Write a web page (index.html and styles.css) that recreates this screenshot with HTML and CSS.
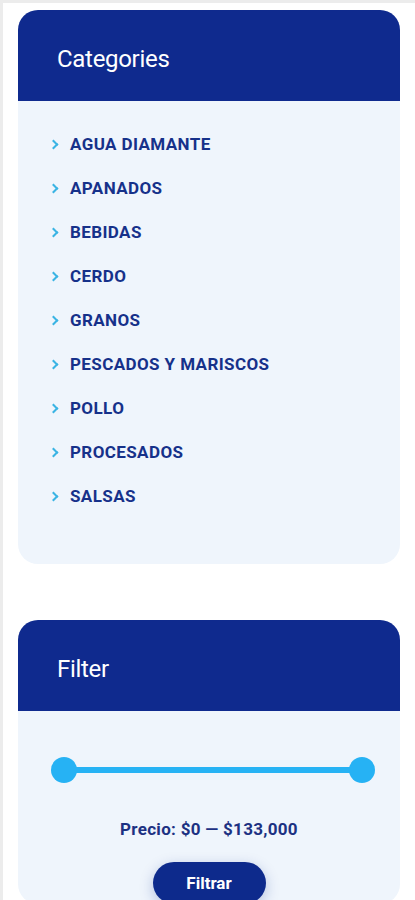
FILE: index.html
```html
<!DOCTYPE html>
<html lang="es">
<head>
<meta charset="UTF-8" />
<meta name="viewport" content="width=device-width, initial-scale=1" />
<title>Tienda - Categorías</title>
<link rel="stylesheet" href="styles.css">
</head>
<body>

<div class="sidebar">

  <section class="widget">
    <h2 class="widget-title">Categories</h2>
    <ul class="cat-list">
      <li><a href="#">AGUA DIAMANTE</a></li>
      <li><a href="#">APANADOS</a></li>
      <li><a href="#">BEBIDAS</a></li>
      <li><a href="#">CERDO</a></li>
      <li><a href="#">GRANOS</a></li>
      <li><a href="#">PESCADOS Y MARISCOS</a></li>
      <li><a href="#">POLLO</a></li>
      <li><a href="#">PROCESADOS</a></li>
      <li><a href="#">SALSAS</a></li>
    </ul>
  </section>

  <section class="widget">
    <h2 class="widget-title">Filter</h2>
    <div class="filter-body">
      <div class="range">
        <span class="handle"></span>
        <span class="track"></span>
        <span class="handle"></span>
      </div>
      <p class="price">Precio: $0 — $133,000</p>
      <button class="filter-btn">Filtrar</button>
    </div>
  </section>

</div>

</body>
</html>
```

FILE: styles.css
```css
body {
  margin: 0;
  padding: 0;
  background-color: #fff;
  font-family: Roboto, 'Liberation Sans', Arial, sans-serif;
}

.sidebar {
  border-top: 3px solid #ececec;
  border-left: 3px solid #ececec;
  padding: 7px 0 0 15px;
  min-height: 900px;
  box-sizing: border-box;
}

.widget {
  width: 382px;
  background-color: #eff5fc;
  border-radius: 20px;
  overflow: hidden;
  margin-bottom: 56px;
}

.widget-title {
  margin: 0;
  height: 91px;
  display: flex;
  align-items: center;
  padding-left: 39px;
  padding-top: 7px;
  box-sizing: border-box;
  background-color: #0f2a8e;
  color: #fff;
  font-size: 24px;
  font-weight: 400;
  letter-spacing: -0.3px;
}

.cat-list {
  list-style: none;
  margin: 0;
  padding: 21px 0 46px 33px;
}

.cat-list li {
  height: 44px;
  display: flex;
  align-items: center;
}

.cat-list li::before {
  content: '';
  width: 5px;
  height: 5px;
  border-top: 2px solid #3ab4e4;
  border-right: 2px solid #3ab4e4;
  transform: rotate(45deg);
  margin: 1px 13px 0 -1px;
}

.cat-list a {
  color: #16318a;
  text-decoration: none;
  font-size: 17px;
  font-weight: 700;
  letter-spacing: 0.4px;
}

.filter-body {
  padding: 46px 0 0;
  display: flex;
  flex-direction: column;
  align-items: center;
}

.range {
  width: 324px;
  margin-left: 8px;
  display: flex;
  align-items: center;
}

.handle {
  width: 26px;
  height: 26px;
  border-radius: 50%;
  background-color: #26b2f4;
  flex-shrink: 0;
}

.track {
  flex: 1;
  height: 6px;
  margin: 0 -2px;
  background-color: #26b2f4;
}

.price {
  margin: 36px 0 0;
  color: #1c3182;
  font-size: 17px;
  font-weight: 700;
  letter-spacing: 0.3px;
}

.filter-btn {
  margin-top: 23px;
  width: 113px;
  height: 42px;
  border: none;
  border-radius: 21px;
  background-color: #0d2a8c;
  color: #fff;
  font-family: Roboto, 'Liberation Sans', Arial, sans-serif;
  font-size: 17px;
  font-weight: 700;
  box-shadow: 0 4px 14px rgba(13, 42, 140, 0.25);
  cursor: pointer;
}
```
